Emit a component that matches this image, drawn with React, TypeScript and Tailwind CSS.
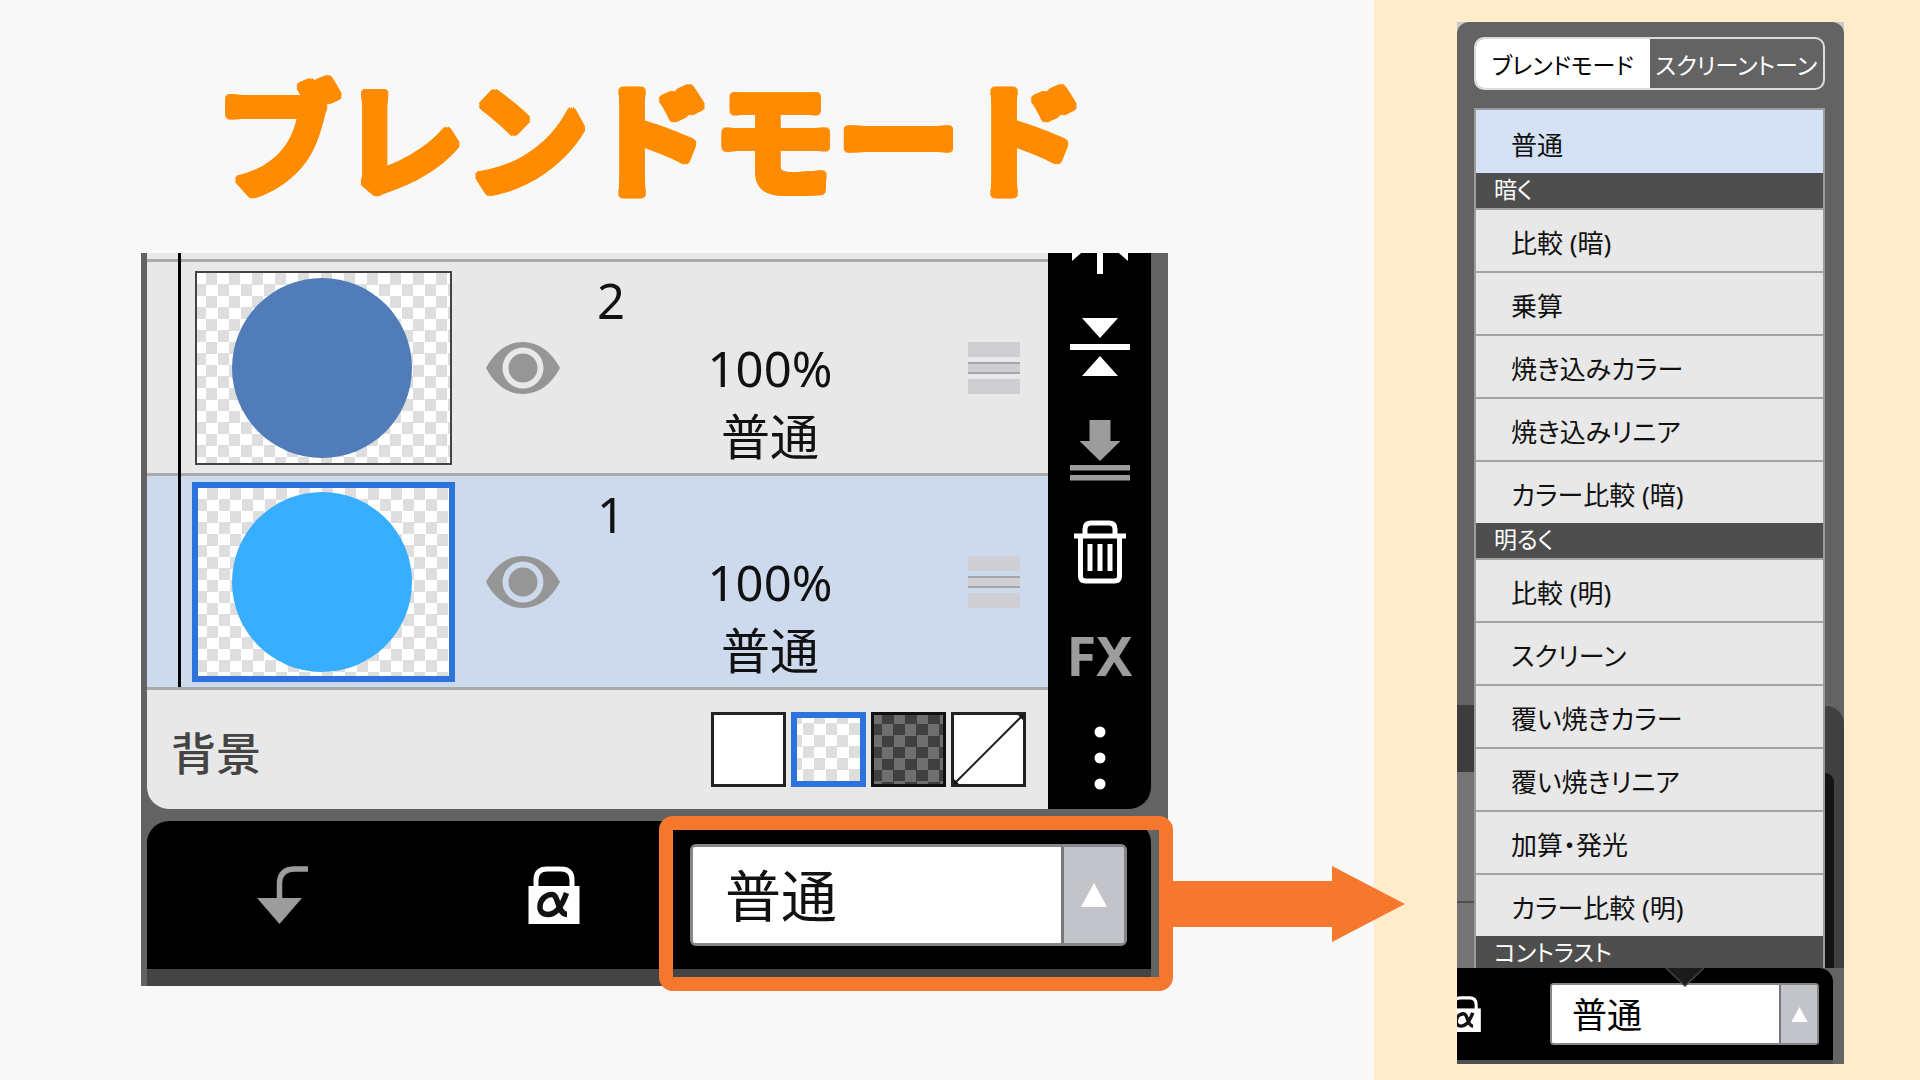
import type { ReactNode } from 'react';

const JP = "font-['Noto_Sans','Noto_Sans_CJK_JP',sans-serif]";
const ROUNDED =
  '[text-shadow:4px_0_#ff8c00,-4px_0_#ff8c00,0_4px_#ff8c00,0_-4px_#ff8c00,3px_3px_#ff8c00,-3px_3px_#ff8c00,3px_-3px_#ff8c00,-3px_-3px_#ff8c00,4px_2px_#ff8c00,-4px_2px_#ff8c00,4px_-2px_#ff8c00,-4px_-2px_#ff8c00,2px_4px_#ff8c00,-2px_4px_#ff8c00,2px_-4px_#ff8c00,-2px_-4px_#ff8c00]';
const LIGHT_CHECKER =
  'bg-[conic-gradient(#fff_25%,#dedede_0_50%,#fff_0_75%,#dedede_0)] bg-[length:23px_23px]';
const DARK_CHECKER =
  'bg-[conic-gradient(#404040_25%,#6f6f6f_0_50%,#404040_0_75%,#6f6f6f_0)] bg-[length:23px_23px]';

type Layer = { name: string; color: string; selected: boolean };

const layers: Layer[] = [
  { name: '2', color: 'bg-[#507cba]', selected: false },
  { name: '1', color: 'bg-[#37aeff]', selected: true },
];

const groups: { title?: string; items: string[] }[] = [
  { items: ['普通'] },
  { title: '暗く', items: ['比較 (暗)', '乗算', '焼き込みカラー', '焼き込みリニア', 'カラー比較 (暗)'] },
  {
    title: '明るく',
    items: ['比較 (明)', 'スクリーン', '覆い焼きカラー', '覆い焼きリニア', '加算・発光', 'カラー比較 (明)'],
  },
];

function EyeIcon() {
  return (
    <svg viewBox="0 0 74 52" className="h-[52px] w-[74px]" aria-hidden="true">
      <path
        fillRule="evenodd"
        fill="#969696"
        d="M0 26C9 9 22 0 37 0S65 9 74 26C65 43 52 52 37 52S9 43 0 26ZM37 5.500A20.500 20.500 0 1 0 37 46.500A20.500 20.500 0 1 0 37 5.500Z"
      />
      <circle cx="37" cy="26" r="14.500" fill="#969696" />
    </svg>
  );
}

function LockIcon({ className }: { className: string }) {
  return (
    <svg viewBox="0 0 52 58" className={className} aria-hidden="true">
      <path d="M8 22V14Q8 3 19 3H33Q44 3 44 14V22" fill="none" stroke="#fff" strokeWidth="5" />
      <rect x="0.500" y="20" width="51" height="38" fill="#fff" />
      <path
        d="M38.500 27C35 37 29 48.500 20 48.500C14.500 48.500 11.500 45 12 40C12.600 33 18 28.500 24 28.500C31 28.500 29 48.500 39 48.500"
        fill="none"
        stroke="#111"
        strokeWidth="5.500"
      />
    </svg>
  );
}

function ToolButton({ label, children }: { label: string; children: ReactNode }) {
  return (
    <button type="button" aria-label={label} className="flex h-[103px] w-full shrink-0 items-center justify-center">
      {children}
    </button>
  );
}

function Toolbar() {
  return (
    <div className="relative w-[103px] shrink-0 overflow-hidden rounded-br-[22px] bg-black">
      <div className="absolute inset-x-0 bottom-0 flex flex-col">
        <ToolButton label="展開">
          <svg viewBox="0 0 64 64" className="size-16" fill="#fff">
            <path d="M4 50V36H20ZM60 50V36H44ZM29 30H35V63H29Z" />
          </svg>
        </ToolButton>
        <ToolButton label="結合">
          <svg viewBox="0 0 64 64" className="size-16" fill="#fff">
            <path d="M14 4H50L32 24ZM2 30H62V36H2ZM14 62H50L32 42Z" />
          </svg>
        </ToolButton>
        <ToolButton label="下に統合">
          <svg viewBox="0 0 64 64" className="size-16" fill="#9c9c9c">
            <path d="M21.500 3H42.500V24H52.500L32 44L11.500 24H21.500ZM2 48H62V53.500H2ZM2 58H62V63.500H2Z" />
          </svg>
        </ToolButton>
        <ToolButton label="削除">
          <svg viewBox="0 0 52 64" className="h-16 w-[52px]" fill="none" stroke="#fff">
            <path
              d="M0 16H52M11 16V9Q11 3 17 3H35Q41 3 41 9V16M6.500 16V56Q6.500 61 11.500 61H40.500Q45.500 61 45.500 56V16"
              strokeWidth="5"
            />
            <path d="M16 24V51M26 24V51M36 24V51" strokeWidth="5" />
          </svg>
        </ToolButton>
        <ToolButton label="FX">
          <span className="text-[54px] leading-none font-bold text-[#9c9c9c]">FX</span>
        </ToolButton>
        <ToolButton label="メニュー">
          <svg viewBox="0 0 12 64" className="h-16 w-3" fill="#fff">
            <circle cx="6" cy="6" r="5.500" />
            <circle cx="6" cy="32" r="5.500" />
            <circle cx="6" cy="58" r="5.500" />
          </svg>
        </ToolButton>
      </div>
    </div>
  );
}

function LayerRow({ layer }: { layer: Layer }) {
  return (
    <li
      className={`flex h-[214px] items-center border-b-[3px] border-[#a8aaae] ${
        layer.selected ? 'bg-[#cddaed]' : 'bg-[#e8e8e8]'
      }`}
    >
      <div className="ml-[45px] flex w-[263px] shrink-0 justify-center">
        <div
          className={`flex items-center justify-center pr-[3px] ${LIGHT_CHECKER} ${
            layer.selected
              ? 'h-[200px] w-[263px] border-[6px] border-[#2c74dc] bg-position-[9px_0px]'
              : 'h-[194px] w-[257px] border-2 border-[#444] bg-position-[9px_0px]'
          }`}
        >
          <div className={`size-[180px] rounded-full ${layer.color}`} />
        </div>
      </div>
      <button type="button" aria-label="表示" className="ml-[31px] shrink-0">
        <EyeIcon />
      </button>
      <div className="ml-[37px] flex-1 text-[49px] leading-[68px] text-[#111]">
        <p>{layer.name}</p>
        <p className="text-center">100%</p>
        <p className="text-center">普通</p>
      </div>
      <button type="button" aria-label="並べ替え" className="mr-[28px] ml-[25px] flex w-[52px] shrink-0 flex-col gap-[5px]">
        <span className="h-[15px] bg-[#cfced3]" />
        <span className="h-[12px] border-y-2 border-[#a6a6a8] bg-[#cfced3]" />
        <span className="h-[15px] bg-[#cfced3]" />
      </button>
    </li>
  );
}

function LayerPanel() {
  return (
    <div className="bg-[#636363] pr-[17px] pl-[6px]">
      <div className="flex h-[556px]">
        <div className="relative flex flex-1 flex-col overflow-hidden rounded-bl-[22px] bg-[#e8e8e8]">
          <div className="h-[9px] border-b-[3px] border-[#a8aaae]" />
          <ul>
            {layers.map((l) => (
              <LayerRow key={l.name} layer={l} />
            ))}
          </ul>
          <div className="absolute top-0 left-[31px] h-[434px] w-[3px] bg-black" />
          <div className="flex flex-1 items-center justify-between pr-[22px] pl-[24px]">
            <span className="pt-2 text-[45px] leading-none font-medium text-[#444]">背景</span>
            <div className="flex gap-[5px]">
              <button type="button" aria-label="白" className="size-[75px] border-[3px] border-[#222] bg-white" />
              <button
                type="button"
                aria-label="透明 (明)"
                className={`size-[75px] border-[6px] border-[#2c74dc] bg-position-[17px_-6px] ${LIGHT_CHECKER}`}
              />
              <button
                type="button"
                aria-label="透明 (暗)"
                className={`size-[75px] border-[3px] border-[#111] bg-position-[8px_9px] ${DARK_CHECKER}`}
              />
              <button type="button" aria-label="なし" className="size-[75px] border-[3px] border-[#222] bg-white">
                <svg viewBox="0 0 69 69" className="size-full">
                  <path d="M0 69L69 0" stroke="#222" strokeWidth="2" />
                  <path d="M0 69V64L5 69ZM69 0V5L64 0Z" fill="#111" />
                </svg>
              </button>
            </div>
          </div>
        </div>
        <Toolbar />
      </div>
      <div className="mt-3 flex h-[148px] items-center rounded-t-[22px] bg-black pr-[24px]">
        <button type="button" aria-label="クリッピング" className="flex flex-1 justify-center">
          <svg viewBox="0 0 51 58" className="h-[58px] w-[51px]">
            <path d="M51 3H38Q22.500 3 22.500 18V34" fill="none" stroke="#9c9c9c" strokeWidth="5.500" />
            <path d="M0 32H45L22.500 58Z" fill="#9c9c9c" />
          </svg>
        </button>
        <button type="button" aria-label="透明度をロック" className="flex flex-1 justify-center">
          <LockIcon className="h-[58px] w-[52px]" />
        </button>
        <div className="relative w-[437px] shrink-0">
          <label className="flex h-[102px] overflow-hidden rounded-md border-[3px] border-[#85868a] bg-white">
            <select
              aria-label="ブレンドモード"
              className="min-w-0 flex-1 appearance-none bg-white pl-[32px] text-[56px] leading-none text-[#111]"
            >
              <option>普通</option>
            </select>
            <span className="flex w-[63px] items-center justify-center border-l-[3px] border-[#77787c] bg-[#c3c4ca]">
              <svg viewBox="0 0 26 24" className="h-6 w-[26px]">
                <path d="M13 0L26 24H0Z" fill="#fff" />
              </svg>
            </span>
          </label>
          <div className="pointer-events-none absolute -top-7 -right-[46px] -bottom-[45px] -left-[31px] rounded-[14px] border-[14px] border-[#f6782f]" />
          <svg
            viewBox="0 0 236 76"
            className="absolute top-1/2 left-[479px] z-10 h-[76px] w-[236px] -translate-y-[29px]"
            aria-hidden="true"
          >
            <path d="M0 15H163V0L236 38L163 76V61H0Z" fill="#f6782f" />
          </svg>
        </div>
      </div>
      <div className="h-[17px] bg-[#444]" />
    </div>
  );
}

function BlendMenu() {
  return (
    <div className="w-[387px] bg-[#c8c8c8] [font-feature-settings:'palt']">
      <div className="rounded-t-[12px] bg-[#636363]">
        <div className="pt-[15px] pr-[19px] pb-[18px] pl-[17px]">
          <div role="tablist" className="grid h-[53px] grid-cols-2 overflow-hidden rounded-[10px] border-2 border-[#dcdcdc] text-[23px] whitespace-nowrap">
            <button type="button" role="tab" aria-selected="true" className="bg-white pt-1 text-black">
              ブレンドモード
            </button>
            <button type="button" role="tab" aria-selected="false" className="pt-1 text-white">
              スクリーントーン
            </button>
          </div>
        </div>
        <div className="relative flex h-[860px]">
          <div className="flex w-[17px] shrink-0 flex-col pt-[597px]">
            <div className="h-[67px] bg-[#3d3d3d]" />
            <div className="h-[131px] border-b-2 border-[#505050] bg-[#757575]" />
            <div className="flex-1 bg-[#757575]" />
          </div>
          <div className="flex-1 border-2 border-b-0 border-[#9c9c9c] text-[26px]">
            {groups.map((g, i) => (
              <div key={g.title ?? i}>
                {g.title && (
                  <h2 className="h-[35px] bg-[#4e4e4e] pl-[18px] text-[23px] leading-[33px] text-white">{g.title}</h2>
                )}
                <ul>
                  {g.items.map((item) => (
                    <li key={item}>
                      <button
                        type="button"
                        className={`block h-[63px] w-full border-t-2 pt-[6px] pl-[35px] text-left text-[#111] ${
                          item === '普通' ? 'border-[#d5e1f5] bg-[#d5e1f5]' : 'border-[#a4a4a4] bg-[#e8e8e8]'
                        }`}
                      >
                        {item}
                      </button>
                    </li>
                  ))}
                </ul>
              </div>
            ))}
            <h2 className="h-[32px] bg-[#4e4e4e] pl-[18px] text-[23px] leading-[32px] text-white">コントラスト</h2>
          </div>
          <div className="flex w-[19px] shrink-0 flex-col pt-[598px]">
            <div className="flex-1 rounded-tr-[18px] bg-[#404040] pt-[67px] pr-[10px]">
              <div className="h-full rounded-tr-[10px] bg-[#141414]" />
            </div>
          </div>
          <svg viewBox="0 0 40 19" className="absolute top-full left-[208px] z-10 h-[19px] w-10" aria-hidden="true">
            <path d="M1 0L20 18L39 0" fill="#1b1b1b" stroke="#444" strokeWidth="1.500" />
          </svg>
        </div>
        <div className="mr-[11px] flex h-[92px] items-center overflow-hidden rounded-tr-[14px] bg-black pr-[14px]">
          <button type="button" aria-label="透明度をロック" className="-ml-[9px]">
            <LockIcon className="h-[36px] w-[34px]" />
          </button>
          <label className="ml-auto flex h-[62px] w-[269px] overflow-hidden rounded border-2 border-[#85868a] bg-white">
            <select
              aria-label="ブレンドモード"
              className="min-w-0 flex-1 appearance-none bg-white pl-[20px] text-[35px] leading-none text-black"
            >
              <option>普通</option>
            </select>
            <span className="flex w-[38px] items-center justify-center border-l-2 border-[#77787c] bg-[#c3c4ca]">
              <svg viewBox="0 0 26 24" className="h-[15px] w-[17px]">
                <path d="M13 0L26 24H0Z" fill="#fff" />
              </svg>
            </span>
          </label>
        </div>
        <div className="mr-[11px] h-[4px] bg-[#505050]" />
      </div>
    </div>
  );
}

export default function App() {
  return (
    <main lang="ja" className={`flex min-h-screen bg-[#f8f8f8] ${JP}`}>
      <section className="min-w-0 flex-1 pr-[206px] pl-[141px]">
        <h1
          className={`flex h-[253px] items-center justify-center pt-[24px] pr-2 text-[124px] leading-none font-bold whitespace-nowrap text-[#ff8c00] ${ROUNDED}`}
        >
          ブレンドモード
        </h1>
        <LayerPanel />
      </section>
      <aside className="w-[546px] shrink-0 bg-[#ffecca] pt-[22px] pl-[83px]">
        <BlendMenu />
      </aside>
    </main>
  );
}
